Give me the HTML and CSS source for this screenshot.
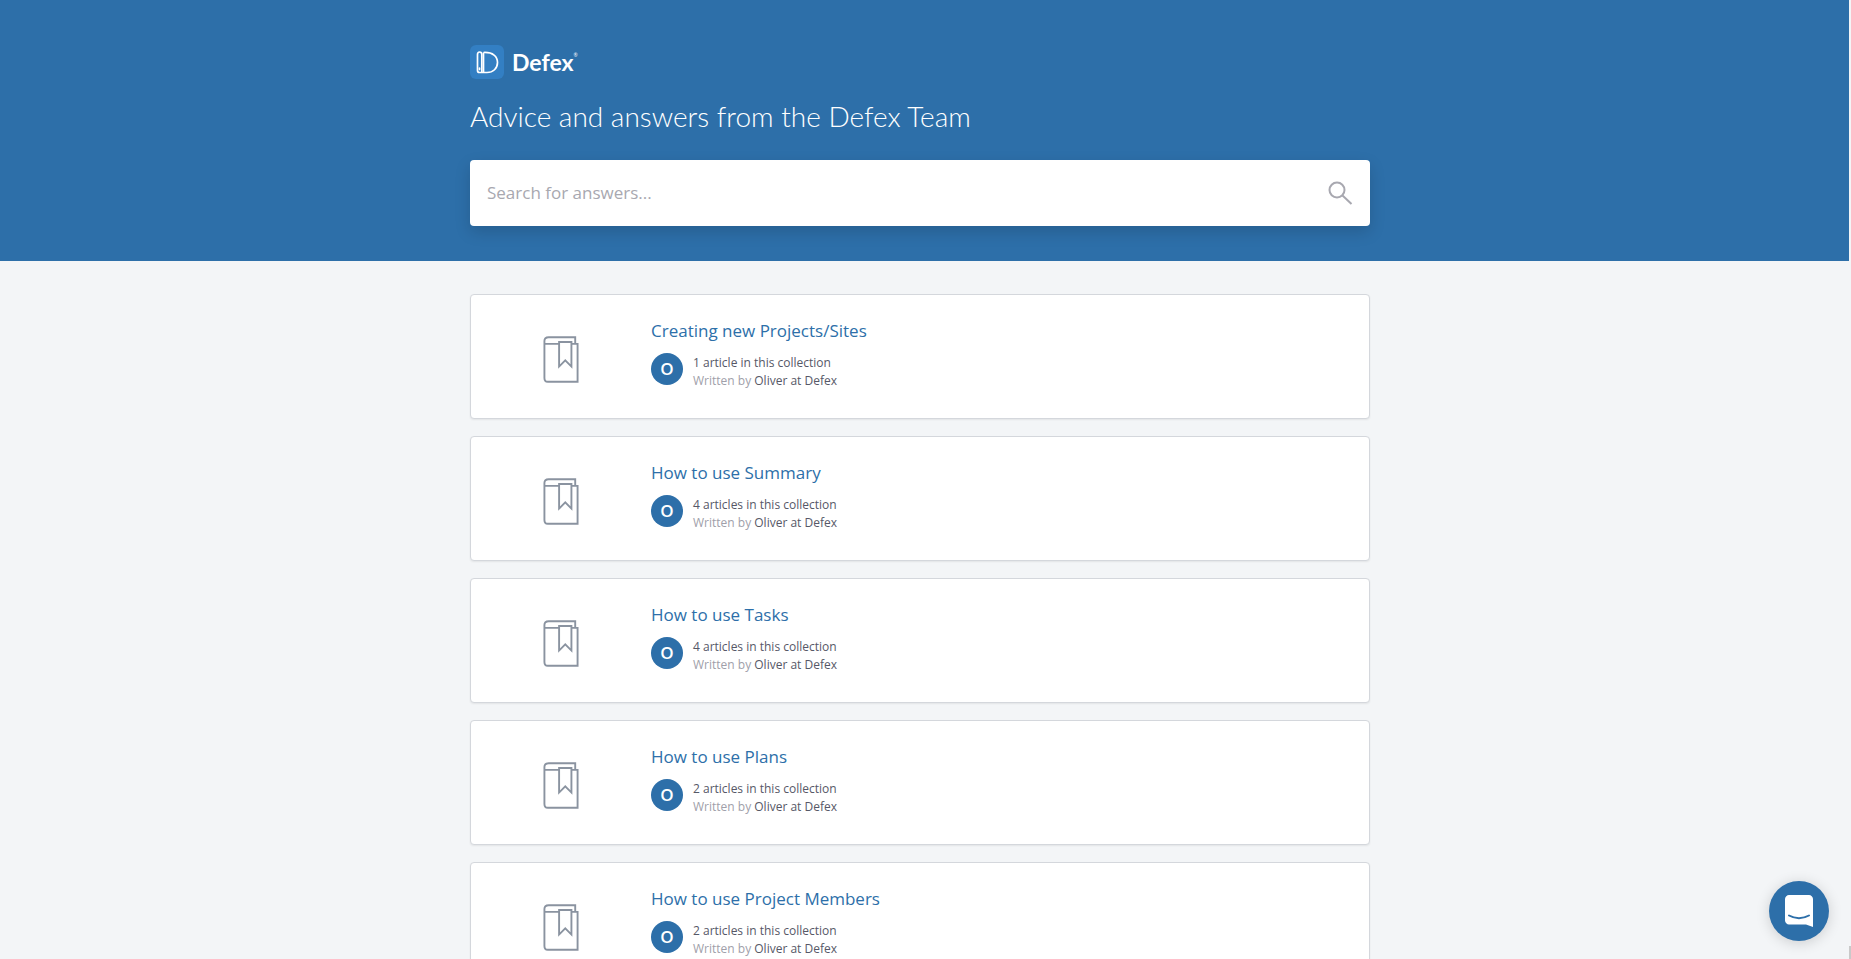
FILE: index.html
```html
<!DOCTYPE html>
<html lang="en">
<head>
  <meta charset="UTF-8">
  <title>Defex Help Center</title>
  <link rel="stylesheet" href="styles.css">
</head>
<body>
  <main>
    <header>
      <div class="container">
        <a class="logo" href="#">
          <span class="logo-mark">
            <svg width="26" height="26" viewBox="0 0 26 26" fill="none" stroke="#fff" stroke-width="1.7">
              <path d="M9.500 3.500C19 3 23.500 7.500 23.500 13.500C23.500 19.500 19 23.500 13 23.500H5.500C4 23.500 3.500 22.500 3.500 21.500V5.500C3.500 4 4.300 3 5.500 3C7 3 7.800 4 7.800 5.500V23.300"/>
              <path d="M9.500 3.500V23.300"/>
              <path d="M5.500 19V20.500" stroke-linecap="round"/>
            </svg>
          </span>
          <span class="logo-text">Defex<sup>®</sup></span>
        </a>
        <h1>Advice and answers from the Defex Team</h1>
        <div class="search">
          <input type="text" placeholder="Search for answers...">
          <svg width="26" height="26" viewBox="0 0 26 26" fill="none" stroke="#a8a8b0" stroke-width="2">
            <circle cx="10" cy="10" r="7.500"/>
            <path d="M15.500 15.500L24.500 24"/>
          </svg>
        </div>
      </div>
    </header>

    <div class="container list">
      <a class="card" href="#">
        <div class="card-icon">
          <svg width="36" height="48" viewBox="0 0 38 50" fill="none" stroke="#8a93a0" stroke-width="2">
            <path d="M34 9V2H6C3 2 1.500 4 1.500 6V45C1.500 47.500 3 49 5 49H36.500V9H1.500"/>
            <path d="M17 7V33L23.500 26.500L30 33V7Z" fill="#fff"/>
          </svg>
        </div>
        <div class="card-body">
          <h2>Creating new Projects/Sites</h2>
          <div class="meta">
            <span class="avatar">O</span>
            <div class="meta-text">
              <div>1 article in this collection</div>
              <div class="by">Written by <span>Oliver at Defex</span></div>
            </div>
          </div>
        </div>
      </a>
      <a class="card" href="#">
        <div class="card-icon">
          <svg width="36" height="48" viewBox="0 0 38 50" fill="none" stroke="#8a93a0" stroke-width="2">
            <path d="M34 9V2H6C3 2 1.500 4 1.500 6V45C1.500 47.500 3 49 5 49H36.500V9H1.500"/>
            <path d="M17 7V33L23.500 26.500L30 33V7Z" fill="#fff"/>
          </svg>
        </div>
        <div class="card-body">
          <h2>How to use Summary</h2>
          <div class="meta">
            <span class="avatar">O</span>
            <div class="meta-text">
              <div>4 articles in this collection</div>
              <div class="by">Written by <span>Oliver at Defex</span></div>
            </div>
          </div>
        </div>
      </a>
      <a class="card" href="#">
        <div class="card-icon">
          <svg width="36" height="48" viewBox="0 0 38 50" fill="none" stroke="#8a93a0" stroke-width="2">
            <path d="M34 9V2H6C3 2 1.500 4 1.500 6V45C1.500 47.500 3 49 5 49H36.500V9H1.500"/>
            <path d="M17 7V33L23.500 26.500L30 33V7Z" fill="#fff"/>
          </svg>
        </div>
        <div class="card-body">
          <h2>How to use Tasks</h2>
          <div class="meta">
            <span class="avatar">O</span>
            <div class="meta-text">
              <div>4 articles in this collection</div>
              <div class="by">Written by <span>Oliver at Defex</span></div>
            </div>
          </div>
        </div>
      </a>
      <a class="card" href="#">
        <div class="card-icon">
          <svg width="36" height="48" viewBox="0 0 38 50" fill="none" stroke="#8a93a0" stroke-width="2">
            <path d="M34 9V2H6C3 2 1.500 4 1.500 6V45C1.500 47.500 3 49 5 49H36.500V9H1.500"/>
            <path d="M17 7V33L23.500 26.500L30 33V7Z" fill="#fff"/>
          </svg>
        </div>
        <div class="card-body">
          <h2>How to use Plans</h2>
          <div class="meta">
            <span class="avatar">O</span>
            <div class="meta-text">
              <div>2 articles in this collection</div>
              <div class="by">Written by <span>Oliver at Defex</span></div>
            </div>
          </div>
        </div>
      </a>
      <a class="card" href="#">
        <div class="card-icon">
          <svg width="36" height="48" viewBox="0 0 38 50" fill="none" stroke="#8a93a0" stroke-width="2">
            <path d="M34 9V2H6C3 2 1.500 4 1.500 6V45C1.500 47.500 3 49 5 49H36.500V9H1.500"/>
            <path d="M17 7V33L23.500 26.500L30 33V7Z" fill="#fff"/>
          </svg>
        </div>
        <div class="card-body">
          <h2>How to use Project Members</h2>
          <div class="meta">
            <span class="avatar">O</span>
            <div class="meta-text">
              <div>2 articles in this collection</div>
              <div class="by">Written by <span>Oliver at Defex</span></div>
            </div>
          </div>
        </div>
      </a>
    </div>
  </main>

  <div class="scrollbar"><div class="scrollbar-thumb"></div></div>

  <a class="launcher" href="#">
    <svg width="28" height="32" viewBox="0 0 28 32">
      <path d="M4 0H24C26 0 28 2 28 4V32L21 29.500H4C2 29.500 0 27.500 0 25.500V4C0 2 2 0 4 0Z" fill="#fff"/>
      <path d="M4 20.500C10 24 18 24 24 20.500" fill="none" stroke="#2d6fa9" stroke-width="2" stroke-linecap="round"/>
    </svg>
  </a>
</body>
</html>
```

FILE: styles.css
```css
* { margin: 0; padding: 0; box-sizing: border-box; }
html, body { height: 100%; overflow: hidden; }
body { display: flex; font-family: "Open Sans", Arial, sans-serif; background: #f3f5f7; color: #565867; }
a { text-decoration: none; color: inherit; }

main { flex: 1; min-width: 0; }
.container { width: 909px; padding-right: 9px; margin: 0 auto; }

.scrollbar { width: 2px; flex: none; display: flex; align-items: flex-end; }
.scrollbar-thumb { width: 2px; height: 13px; background: #c9c9c9; }

header {
  background-color: #2d6fa9;
  color: white;
  height: 261px;
  padding-top: 45px;
}
.logo { display: flex; align-items: center; gap: 8px; height: 34px; }
.logo-mark {
  width: 34px;
  height: 34px;
  border-radius: 6px;
  background: #337fc3;
  display: flex;
  align-items: center;
  justify-content: center;
}
.logo-text { font-family: Lato, sans-serif; font-size: 23px; font-weight: 700; }
.logo-text sup { font-size: 5px; vertical-align: 14px; font-weight: 400; }

h1 {
  font-family: Lato, sans-serif;
  font-size: 28px;
  font-weight: 300;
  line-height: 36px;
  margin-top: 19px;
}

.search {
  margin-top: 26px;
  height: 66px;
  background: white;
  border-radius: 4px;
  box-shadow: 0 6px 16px rgba(0,0,0,0.15);
  display: flex;
  align-items: center;
  padding: 0 17px;
}
.search input {
  flex: 1;
  border: none;
  outline: none;
  font-family: "Open Sans", sans-serif;
  font-size: 17px;
  background: transparent;
  color: #565867;
  padding-bottom: 2px;
}
.search input::placeholder { color: #a8a8b0; opacity: 1; }

.list { padding-top: 33px; }

.card {
  display: flex;
  align-items: center;
  height: 125px;
  margin-bottom: 17px;
  background: white;
  border: 1px solid #d4d7dc;
  border-radius: 4px;
  box-shadow: 0 1px 2px rgba(0,0,0,0.07);
}
.card-icon { width: 180px; display: flex; justify-content: center; flex: none; padding-top: 4px; }
.card-body { flex: 1; margin-top: -3px; }
.card h2 { font-size: 17px; font-weight: 400; color: #2d6fa9; line-height: 24px; margin-top: -2px; margin-bottom: 10px; }
.meta { display: flex; align-items: flex-start; gap: 10px; }
.avatar {
  width: 32px;
  height: 32px;
  border-radius: 50%;
  background: #2d6fa9;
  flex: none;
  display: flex;
  align-items: center;
  justify-content: center;
  color: white;
  font-size: 17px;
  font-weight: 600;
  padding-bottom: 1px;
}
.meta-text { font-size: 12px; line-height: 18px; color: #565867; margin-top: 1px; }
.by { color: #a0a0aa; }
.by span { color: #565867; }

.launcher {
  position: fixed;
  right: 22px;
  bottom: 18px;
  width: 60px;
  height: 60px;
  border-radius: 50%;
  background: #2d6fa9;
  box-shadow: 0 2px 14px rgba(0,0,0,0.16);
  display: flex;
  align-items: center;
  justify-content: center;
}
```
